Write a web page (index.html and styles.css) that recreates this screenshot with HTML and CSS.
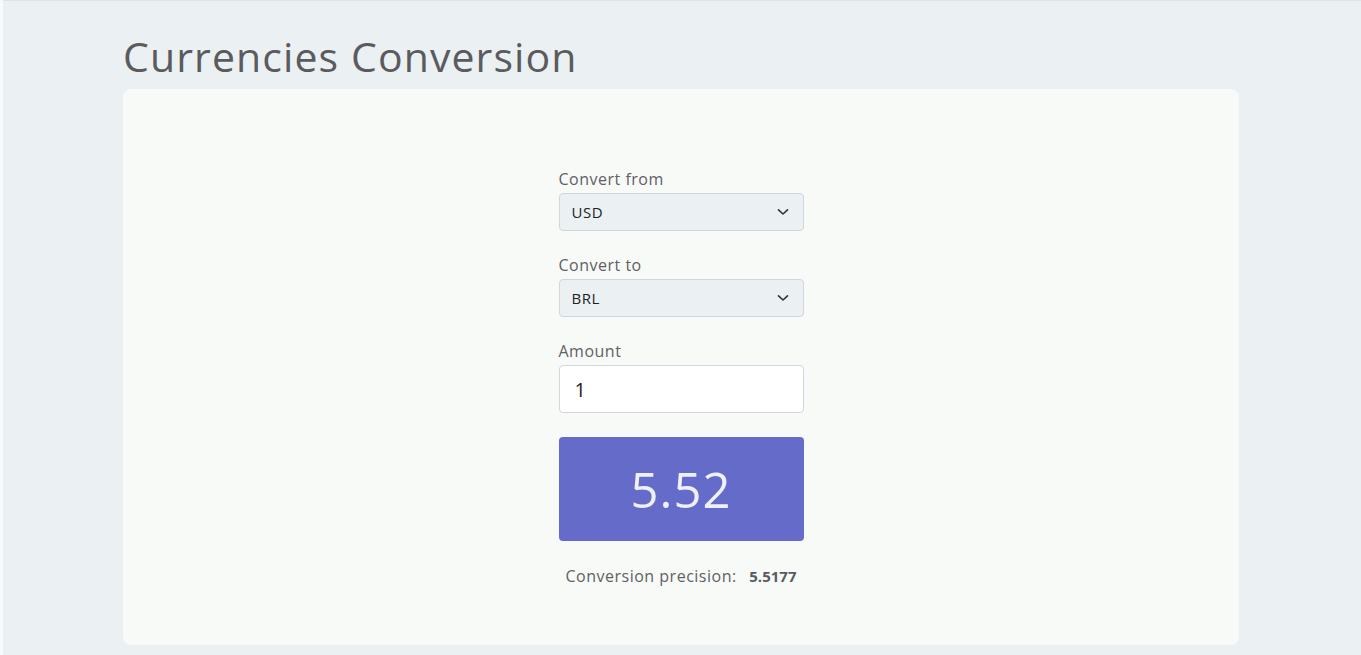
FILE: index.html
```html
<!DOCTYPE html>
<html lang="en">
<head>
<meta charset="utf-8">
<title>Currencies Conversion</title>
<link rel="stylesheet" href="styles.css">
</head>
<body>
<div class="page">
  <main class="container">
    <h1 class="title">Currencies Conversion</h1>
    <section class="card">
      <form class="form">
        <label class="field">
          <span class="label">Convert from</span>
          <span class="select">
            <span class="select-value">USD</span>
            <svg class="chev" width="12" height="8" viewBox="0 0 12 8"><path d="M1.5 1.8 L6 6 L10.5 1.8" fill="none" stroke="#333" stroke-width="1.6" stroke-linecap="round" stroke-linejoin="round"/></svg>
          </span>
        </label>
        <label class="field">
          <span class="label">Convert to</span>
          <span class="select">
            <span class="select-value">BRL</span>
            <svg class="chev" width="12" height="8" viewBox="0 0 12 8"><path d="M1.5 1.8 L6 6 L10.5 1.8" fill="none" stroke="#333" stroke-width="1.6" stroke-linecap="round" stroke-linejoin="round"/></svg>
          </span>
        </label>
        <label class="field">
          <span class="label">Amount</span>
          <span class="input">1</span>
        </label>
        <div class="result">5.52</div>
        <p class="precision">Conversion precision: <strong>5.5177</strong></p>
      </form>
    </section>
  </main>
</div>
</body>
</html>
```

FILE: styles.css
```css
* { box-sizing: border-box; }
html, body { margin: 0; padding: 0; }
body {
  font-family: "Open Sans", "Liberation Sans", sans-serif;
  background: #f8faf9;
  height: 655px;
  overflow: hidden;
}
.page {
  margin-left: 3px;
  border-top: 1px solid #dde3e8;
  background: #ebf0f3;
  height: 655px;
}
.container {
  width: 1116px;
  margin-left: 120px;
  padding-top: 30px;
}
.title {
  margin: 0 0 8px 0;
  font-weight: 400;
  font-size: 41px;
  line-height: 50px;
  color: #5b5b5e;
  letter-spacing: 1.1px;
}
.card {
  background: #f8faf8;
  border-radius: 8px;
  height: 556px;
  display: flex;
  justify-content: center;
  padding-top: 80px;
}
.form {
  width: 245px;
  display: flex;
  flex-direction: column;
}
.field {
  display: flex;
  flex-direction: column;
  margin-bottom: 24px;
}
.label {
  font-size: 16px;
  line-height: 21px;
  padding-bottom: 3px;
  color: #606066;
  letter-spacing: 0.5px;
}
.select {
  height: 38px;
  background: #ebf0f3;
  border: 1px solid #cfd6de;
  border-radius: 4px;
  display: flex;
  align-items: center;
  justify-content: space-between;
  padding: 0 14px 0 12px;
}
.select-value {
  font-size: 15px;
  color: #222;
  letter-spacing: 0.5px;
}
.chev { display: block; }
.input {
  height: 48px;
  background: #fff;
  border: 1px solid #cfd6de;
  border-radius: 4px;
  display: flex;
  align-items: center;
  padding-left: 15px;
  font-size: 20px;
  color: #222;
}
.result {
  height: 104px;
  background: #646bc8;
  border-radius: 4px;
  display: flex;
  align-items: center;
  justify-content: center;
  color: #eef0fa;
  font-size: 49px;
  font-weight: 400;
  letter-spacing: 1px;
}
.precision {
  margin: 25px 0 0 0;
  text-align: center;
  font-size: 16px;
  color: #606066;
  line-height: 20px;
  letter-spacing: 0.5px;
}
.precision strong {
  margin-left: 8px;
  font-weight: 700;
  font-size: 15px;
  color: #5a5a5e;
  letter-spacing: 0;
}
```
